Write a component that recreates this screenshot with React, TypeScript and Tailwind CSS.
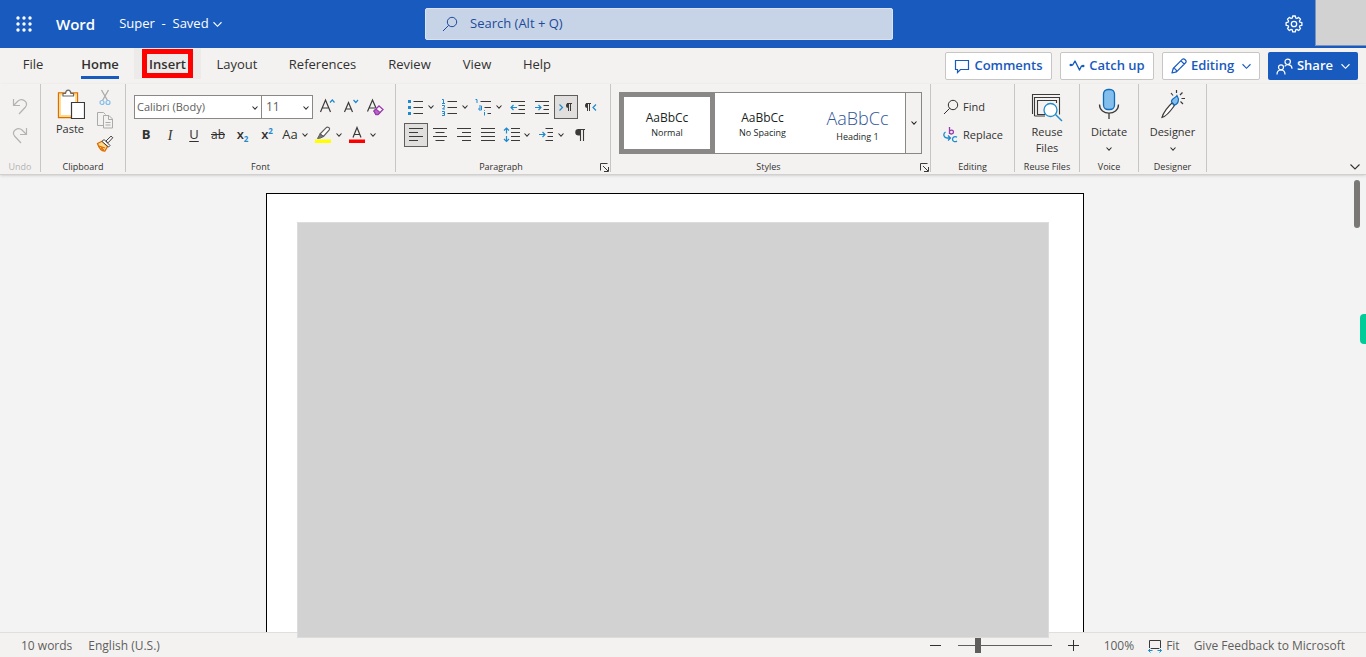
import { useState } from "react"
import type { ReactNode } from "react"
import clsx from "clsx"

const tabs = [
  { name: "File", width: "w-[66px]" },
  { name: "Home", width: "w-[68px]" },
  { name: "Insert", width: "w-[67px]" },
  { name: "Layout", width: "w-[72px]" },
  { name: "References", width: "w-[99px]" },
  { name: "Review", width: "w-[75px]" },
  { name: "View", width: "w-[60px]" },
  { name: "Help", width: "w-[60px]" },
]

export default function App() {
  return (
    <div className="flex h-screen flex-col overflow-hidden bg-[#f3f2f1] font-['Open_Sans','Noto_Sans',sans-serif] text-[#323130]">
      <TitleBar />
      <TabBar />
      <Ribbon />
      <DocumentArea />
      <StatusBar />
    </div>
  )
}

function TitleBar() {
  return (
    <header className="flex h-12 shrink-0 items-center justify-between bg-[#185abd] text-white">
      <div className="flex w-[425px] items-center">
        <button aria-label="App launcher" className="flex w-12 justify-center">
          <svg width="16" height="16" viewBox="0 0 16 16" fill="currentColor">
            {[2, 8, 14].map((y) => [2, 8, 14].map((x) => <circle key={`${x}-${y}`} cx={x} cy={y} r="1.7" />))}
          </svg>
        </button>
        <span className="ml-2 text-[15px] font-semibold">Word</span>
        <button className="ml-6 flex items-center gap-1 text-[13px]">
          <span className="whitespace-pre">Super  -  Saved</span>
          <Chevron size={9} />
        </button>
      </div>

      <div className="flex h-8 flex-1 items-center rounded-xs border border-[#dbe3f1] bg-[#c7d4e8] px-4 text-[#1d4b99]">
        <SearchIcon className="size-4" />
        <input
          type="text"
          aria-label="Search"
          placeholder="Search (Alt + Q)"
          className="ml-3 flex-1 bg-transparent text-[13px] outline-none placeholder:text-[#1d4b99]"
        />
      </div>

      <div className="flex w-[473px] items-center justify-end self-stretch">
        <button aria-label="Settings" className="mr-3">
          <svg width="18" height="18" viewBox="0 0 18 18" fill="none" stroke="currentColor" strokeWidth="1.3" strokeLinejoin="round">
            <path d="M7.7 1h2.6l.4 2 1.2.5 1.7-1.1 1.9 1.9-1.1 1.7.5 1.2 2 .5v2.6l-2 .4-.5 1.2 1.1 1.7-1.9 1.9-1.7-1.1-1.2.5-.4 2H7.7l-.4-2-1.2-.5-1.7 1.1-1.9-1.9 1.1-1.7-.5-1.2-2-.4V7.7l2-.5.5-1.2-1.1-1.7 1.9-1.9 1.7 1.1 1.2-.5z" />
            <circle cx="9" cy="9" r="2.7" />
          </svg>
        </button>
        <div className="mb-0.5 w-[51px] self-stretch border-b border-l border-[#7c94bd] bg-[#d2d2d2]" />
      </div>
    </header>
  )
}

function TabBar() {
  const [active, setActive] = useState("Home")

  return (
    <nav className="flex h-9 shrink-0 items-start justify-between pr-2">
      <div className="flex">
        {tabs.map((tab) => (
          <button
            key={tab.name}
            onClick={() => setActive(tab.name)}
            className={clsx(
              "relative flex h-[31px] justify-center pt-1.5 text-[13px] leading-5",
              tab.width,
              tab.name === "Insert" && "bg-[#edebe9] font-semibold",
              tab.name === active && "font-semibold",
            )}
          >
            {tab.name}
            {tab.name === active && <span className="absolute inset-x-[15px] bottom-0 h-[3px] bg-[#185abd]" />}
            {tab.name === "Insert" && <span className="absolute inset-x-2 top-px bottom-px border-5 border-[#fe0000]" />}
          </button>
        ))}
      </div>

      <div className="flex gap-2 pt-1 text-[13px] font-semibold text-[#185abd]">
        <button className="flex h-7 w-[107px] items-center justify-center gap-1 rounded-xs border border-[#c8c6c4] bg-white">
          <svg width="16" height="16" viewBox="0 0 16 16" fill="none" stroke="currentColor" strokeWidth="1.2">
            <path d="M1.5 2.500h13v9H6.500l-3 3v-3h-2z" />
          </svg>
          Comments
        </button>
        <button className="flex h-7 w-[94px] items-center justify-center gap-1 rounded-xs border border-[#c8c6c4] bg-white">
          <svg width="16" height="16" viewBox="0 0 16 16" fill="none" stroke="currentColor" strokeWidth="1.4">
            <path d="M1.5 7h2.2L6 3l4.500 9L12.500 8H14" strokeLinejoin="round" />
            <circle cx="1.8" cy="7" r="1.3" fill="currentColor" stroke="none" />
            <circle cx="14.2" cy="8" r="1.3" fill="currentColor" stroke="none" />
          </svg>
          Catch up
        </button>
        <button className="flex h-7 w-[98px] items-center justify-center gap-1 rounded-xs border border-[#c8c6c4] bg-white">
          <svg width="16" height="16" viewBox="0 0 16 16" fill="none" stroke="currentColor" strokeWidth="1.2" strokeLinejoin="round">
            <path d="M1 15l1.200-4.500L11.500 1.200c1.500-1.200 4.500 1.500 3.300 3.300L5.500 13.800zM10 2.800L13.200 6M2.200 10.500c1.800 0 3.300 1.500 3.300 3.300" />
          </svg>
          Editing
          <Chevron size={9} className="ml-1" />
        </button>
        <button className="flex h-7 w-[90px] items-center justify-center gap-1 rounded-xs bg-[#185abd] text-white">
          <svg width="17" height="17" viewBox="0 0 17 17" fill="none" stroke="currentColor" strokeWidth="1.2">
            <circle cx="5" cy="9.3" r="2.5" />
            <path d="M1 16.500c0-6 8-6 8 0" />
            <circle cx="11.7" cy="3.8" r="2.7" />
            <path d="M8.700 8.300c2-2.500 7.300-2 7.300 2.500" />
          </svg>
          Share
          <Chevron size={9} className="ml-1" />
        </button>
      </div>
    </nav>
  )
}

function Ribbon() {
  return (
    <section className="relative z-20 flex h-[91px] shrink-0 border-b border-[#d2d0ce] shadow-sm">
      <Group label="Undo" width="w-[41px]" disabled>
        <div className="flex flex-col items-center gap-3 pt-3.5 text-[#b5b3b1]">
          <button aria-label="Undo">
            <UndoIcon />
          </button>
          <button aria-label="Redo">
            <UndoIcon className="-scale-x-100" />
          </button>
        </div>
      </Group>

      <Group label="Clipboard" width="w-[85px]">
        <div className="flex justify-center gap-2 pt-[5px]">
          <button className="flex w-9 flex-col items-center text-[11px] leading-4">
            <svg width="30" height="32" viewBox="0 0 30 32" fill="none">
              <path d="M3.500 4h19v24.500h-19z" fill="#fff" stroke="#de6c00" strokeWidth="1.3" />
              <path d="M5 5.500h16V27H5z" stroke="#fbdc8e" strokeWidth="1.8" />
              <path d="M8 7V4.500h2.500c.4-4.500 5-4.500 5.400 0h2.600V7z" fill="#fff" stroke="#696969" strokeWidth="1.2" />
              <path d="M16.500 13.500h13v16h-13z" fill="#fff" stroke="#3b3a39" strokeWidth="1.2" />
            </svg>
            Paste
          </button>
          <div className="flex flex-col gap-1.5">
            <button aria-label="Cut">
              <svg width="18" height="17" viewBox="0 0 18 17" fill="none">
                <path d="M5.500 1l6 10.500M12.500 1l-6 10.500" stroke="#aaa" strokeWidth="1.3" />
                <circle cx="6" cy="13.500" r="2" stroke="#83bdeb" strokeWidth="1.2" />
                <circle cx="12" cy="13.500" r="2" stroke="#83bdeb" strokeWidth="1.2" />
              </svg>
            </button>
            <button aria-label="Copy">
              <svg width="18" height="17" viewBox="0 0 18 17" fill="none" stroke="#aaa">
                <path d="M7.500 13.500h-6v-13h6l2 2M7.500 3.500h5.500l3.500 3.500v9h-9zM12.500 3.500v4h4M9.500 10.500h5M9.500 13h5" />
              </svg>
            </button>
            <button aria-label="Format painter">
              <svg width="18" height="17" viewBox="0 0 18 17" fill="none">
                <path d="M1.500 8.500l5-2.500 5 5.500-2.500 4.500c-3 .3-6-3-7.500-7.500z" fill="#fbdc8e" stroke="#de6c00" strokeWidth="1.3" />
                <path d="M3 11l6 2M5 12.500l3 3" stroke="#de6c00" strokeWidth="1.3" />
                <path d="M6 6.500L8 4.500l6 6-1.500 1.500z" fill="#fff" stroke="#3b3a39" />
                <path d="M10 6l5-4.800 1.800 1.500L12 7.800z" fill="#fff" stroke="#3b3a39" />
              </svg>
            </button>
          </div>
        </div>
      </Group>

      <FontGroup />
      <ParagraphGroup />
      <StylesGroup />

      <Group label="Editing" width="w-[84px]">
        <div className="flex flex-col items-start gap-1 pt-[11px] pl-3 text-[11px] leading-6">
          <button className="flex items-center gap-1">
            <SearchIcon className="size-4" />
            Find
          </button>
          <button className="flex items-center gap-1">
            <svg width="16" height="16" viewBox="0 0 16 16" fill="none" strokeWidth="1.3">
              <path d="M6.500 0v7M6.500 4.500c1-2 4-1.500 4 .5s-3 2.800-4 .8" stroke="#9b3bad" />
              <path d="M14 10.300c-2-1.500-4.500-.3-4.500 1.900s2.500 3.300 4.500 1.800" stroke="#1e8bcd" />
              <path d="M2.500 5C-.5 7 1 11 4 11h3M5 8.500L7.500 11 5 13.500" stroke="#1e8bcd" />
            </svg>
            Replace
          </button>
        </div>
      </Group>

      <Group label="Reuse Files" width="w-[65px]">
        <button className="flex w-full flex-col items-center pt-2 text-[11px] leading-4">
          <svg width="32" height="32" viewBox="0 0 32 32" fill="none">
            <path d="M1.500 22V2.500H29M3.500 24V5.500h25v17" stroke="#3b3a39" strokeWidth="1.1" />
            <path d="M14 22.500H6.500v-14h19V11M3.500 24H14" stroke="#3b3a39" strokeWidth="1.1" />
            <circle cx="19.500" cy="18" r="6.500" fill="#fff" stroke="#1e8bcd" strokeWidth="1.3" />
            <path d="M24.500 22.500l6.500 6.500" stroke="#1e8bcd" strokeWidth="1.4" />
          </svg>
          <span>
            Reuse
            <br />
            Files
          </span>
        </button>
      </Group>

      <Group label="Voice" width="w-[59px]">
        <button className="flex w-full flex-col items-center pt-1 text-[11px] leading-4">
          <svg width="22" height="32" viewBox="0 0 22 32" fill="none">
            <rect x="5.500" y="1.500" width="11" height="20" rx="4.500" fill="#83beec" stroke="#0f6cbd" strokeWidth="1.3" />
            <path d="M1.500 16.500c0 11.500 19 11.500 19 0M11 25.500V31" stroke="#3b3a39" strokeWidth="1.3" />
          </svg>
          <span className="mt-1">Dictate</span>
          <span className="pt-1.5">
            <Chevron size={6} />
          </span>
        </button>
      </Group>

      <Group label="Designer" width="w-[68px]">
        <button className="flex w-full flex-col items-center pt-1 text-[11px] leading-4">
          <svg width="28" height="32" viewBox="0 0 28 32" fill="none">
            <path d="M3 29.500c1-4.500 6.500-11.500 10-14.500l2.500 2.500C13 21 7 28.500 3 29.500z" fill="#fff" stroke="#3b3a39" strokeWidth="1.2" />
            <path d="M12.500 14c-.5-4 3.500-3 5.500-6.500 3 4.500 1 9-3 9.500-.5-1.500-1-2.200-2.500-3z" fill="#83beec" stroke="#0f6cbd" strokeWidth="1.2" />
            <path d="M12 5l2 2.500M17.500 2v3M23.500 4.500L21 7M22.500 10.500H26M21.500 13.500L24 16" stroke="#3b3a39" strokeWidth="1.2" />
          </svg>
          <span className="mt-1">Designer</span>
          <span className="pt-1.5">
            <Chevron size={6} />
          </span>
        </button>
      </Group>

      <button aria-label="Collapse ribbon" className="mt-auto mr-1.5 mb-0.5 ml-auto">
        <Chevron size={10} />
      </button>
    </section>
  )
}

function FontGroup() {
  return (
    <Group label="Font" width="w-[270px]">
      <div className="flex flex-col gap-1 pt-[11px] pl-2">
        <div className="flex h-6 items-center">
          <div className="relative h-6 w-32">
            <select
              aria-label="Font name"
              className="block h-6 w-full appearance-none border border-[#8a8886] bg-white pl-0.5 text-[11px] text-[#605e5c]"
            >
              <option>Calibri (Body)</option>
            </select>
            <Chevron size={6} className="pointer-events-none absolute top-2.5 right-1" />
          </div>
          <div className="relative -ml-px h-6 w-[52px]">
            <select
              aria-label="Font size"
              className="block h-6 w-full appearance-none border border-[#8a8886] bg-white pl-1 text-[12px] text-[#605e5c]"
            >
              <option>11</option>
            </select>
            <Chevron size={6} className="pointer-events-none absolute top-2.5 right-1" />
          </div>
          <button aria-label="Grow font" className="ml-0.5 flex w-6 justify-center">
            <svg width="18" height="18" viewBox="0 0 18 18" fill="none" strokeWidth="1.2">
              <path d="M2.500 14L7.500 2l5 12M4.200 10h6.600" stroke="#3b3a39" />
              <path d="M12 4.500L14.300 2l2.200 2.500" stroke="#1e8bcd" />
            </svg>
          </button>
          <button aria-label="Shrink font" className="flex w-6 justify-center">
            <svg width="18" height="18" viewBox="0 0 18 18" fill="none" strokeWidth="1.2">
              <path d="M2.500 14l4-9.500 4 9.500M4 11h5" stroke="#3b3a39" />
              <path d="M11.500 2l2.300 2.500L16 2" stroke="#1e8bcd" />
            </svg>
          </button>
          <button aria-label="Clear formatting" className="flex w-6 justify-center">
            <svg width="18" height="18" viewBox="0 0 18 18" fill="none" strokeWidth="1.2">
              <path d="M1.500 13.500l5-11.500 3.500 8M3 10h6" stroke="#3b3a39" />
              <path d="M8 13l5-5 4 3.500-5 5H10z" fill="#fff" stroke="#9b3bad" strokeWidth="1.3" />
              <path d="M8 13l2-2 4 3.500-2 2h-2z" fill="#b867c5" stroke="#9b3bad" />
            </svg>
          </button>
        </div>

        <div className="flex h-6 items-center text-[13px]">
          <button className="w-6 font-bold">B</button>
          <button className="w-6 font-['Liberation_Serif',serif] text-[14px] italic">I</button>
          <button className="w-6 underline underline-offset-2">U</button>
          <button className="w-6 text-[12px] line-through">ab</button>
          <button className="flex w-[25px] items-center justify-center font-semibold">
            x<span className="pt-2 text-[8px] font-bold text-[#1e8bcd]">2</span>
          </button>
          <button className="flex w-6 items-center justify-center font-semibold">
            x<span className="pb-2 text-[8px] font-bold text-[#1e8bcd]">2</span>
          </button>
          <button className="flex w-8 items-center justify-center gap-1">
            Aa
            <Chevron size={6} />
          </button>
          <button aria-label="Highlight color" className="ml-[3px] flex items-center gap-1">
            <svg width="18" height="18" viewBox="0 0 18 18" fill="none">
              <path d="M6 8l6-6.200c1.500-1.500 4.500 0 3.200 2L9.500 10.500z" fill="#fff" stroke="#605e5c" strokeWidth="1.2" />
              <path d="M6 8l3.500 2.500-3 1.500-3 .5z" fill="#777" stroke="#605e5c" />
              <path d="M1 13.500h16V17H1z" fill="#ff0" />
            </svg>
            <Chevron size={6} />
          </button>
          <button aria-label="Font color" className="ml-1.5 flex items-center gap-1">
            <svg width="18" height="18" viewBox="0 0 18 18" fill="none">
              <path d="M5 11.500L9 1.500l4 10M6.300 8.500h5.400" stroke="#3b3a39" strokeWidth="1.2" />
              <path d="M1 13.500h16V17H1z" fill="red" />
            </svg>
            <Chevron size={6} />
          </button>
        </div>
      </div>
    </Group>
  )
}

function ParagraphGroup() {
  return (
    <Group label="Paragraph" width="w-[215px]" launcher>
      <div className="flex flex-col gap-1 pt-[11px] pl-2">
        <div className="flex">
          <Tool label="Bullets" menu>
            <path d="M6.500 3.500H16M6.500 9.500H16M6.500 15.500H16" stroke="#3b3a39" strokeWidth="1.1" />
            <path d="M1 2h3v3H1zM1 8h3v3H1zM1 14h3v3H1z" fill="#1e8bcd" />
          </Tool>
          <Tool label="Numbering" menu>
            <path d="M6.500 3.500H16M6.500 9.500H16M6.500 15.500H16" stroke="#3b3a39" strokeWidth="1.1" />
            <path d="M1 1.500h1.500v4M1 5.500h3M1 7.500h2.500v1.500L1.500 11H4M1 13.500h2.500v4H1M1.500 15.500h2" stroke="#1e8bcd" />
          </Tool>
          <Tool label="Multilevel list" menu>
            <path d="M5.500 3.500H16M9.500 9.500H16M12.500 15.500H16" stroke="#3b3a39" strokeWidth="1.1" />
            <path d="M.5 1.500h1.500V5M4 8h2.500v4H4v-2h2.500M9.500 12v.8M9.500 14v3.500" stroke="#1e8bcd" />
          </Tool>
          <Tool label="Decrease indent">
            <path d="M2 3.500h14M9.500 7.500H16M9.500 11.500H16M2 15.500h14" stroke="#3b3a39" strokeWidth="1.1" />
            <path d="M8 9.500H2M4.500 7L2 9.500 4.500 12" stroke="#1e8bcd" strokeWidth="1.2" />
          </Tool>
          <Tool label="Increase indent">
            <path d="M2 3.500h14M10.500 7.500H16M10.500 11.500H16M2 15.500h14" stroke="#3b3a39" strokeWidth="1.1" />
            <path d="M2 9.500h6M5.500 7L8 9.500 5.500 12" stroke="#1e8bcd" strokeWidth="1.2" />
          </Tool>
          <Tool label="Left to right" pressed>
            <path d="M2.500 6.500L5.500 9.500l-3 3" stroke="#1e8bcd" strokeWidth="1.2" />
            <path d="M11.500 5.500V13M13.500 5.500V13M10 5.500h5" stroke="#3b3a39" />
            <path d="M11.500 5a2.500 2.500 0 000 5z" fill="#3b3a39" />
          </Tool>
          <Tool label="Right to left">
            <path d="M15 6.500l-3 3 3 3" stroke="#1e8bcd" strokeWidth="1.2" />
            <path d="M6.500 5.500V13M8.500 5.500V13M5 5.500h5" stroke="#3b3a39" />
            <path d="M6.500 5a2.500 2.500 0 000 5z" fill="#3b3a39" />
          </Tool>
        </div>
        <div className="flex">
          <Tool label="Align left" pressed>
            <path d="M2 2.500h14M2 6.500h9M2 10.500h14M2 14.500h9" stroke="#3b3a39" strokeWidth="1.1" />
          </Tool>
          <Tool label="Center">
            <path d="M2 2.500h14M4.500 6.500h9M2 10.500h14M4.500 14.500h9" stroke="#3b3a39" strokeWidth="1.1" />
          </Tool>
          <Tool label="Align right">
            <path d="M2 2.500h14M7 6.500h9M2 10.500h14M7 14.500h9" stroke="#3b3a39" strokeWidth="1.1" />
          </Tool>
          <Tool label="Justify">
            <path d="M2 2.500h14M2 6.500h14M2 10.500h14M2 14.500h14" stroke="#3b3a39" strokeWidth="1.1" />
          </Tool>
          <Tool label="Line spacing" menu>
            <path d="M8 2.500h9M8 6.500h9M8 10.500h9M8 14.500h9" stroke="#3b3a39" strokeWidth="1.1" />
            <path d="M3.500 2v5.500M1 4.500L3.500 2 6 4.500M3.500 10v5.500M1 13l2.500 2.500L6 13" stroke="#1e8bcd" strokeWidth="1.2" />
          </Tool>
          <Tool label="Special indent" menu>
            <path d="M8.500 2.500H16M10.500 6.500H16M10.500 10.500H16M8.500 14.500H16" stroke="#3b3a39" strokeWidth="1.1" />
            <path d="M2 8.500h6M5.500 6L8 8.500 5.500 11" stroke="#1e8bcd" strokeWidth="1.2" />
          </Tool>
          <Tool label="Show paragraph marks">
            <path d="M9.500 3.500V15M12.500 3.500V15M7 3.500h7" stroke="#3b3a39" strokeWidth="1.1" />
            <path d="M9.500 3h-2a3.200 3.200 0 000 6.500h2z" fill="#3b3a39" />
          </Tool>
        </div>
      </div>
    </Group>
  )
}

function StylesGroup() {
  return (
    <Group label="Styles" width="w-[320px]" launcher>
      <div className="mx-2 mt-2 flex h-[62px] border border-[#8a8886] bg-white text-[#201f1e]">
        <button className="-my-px -ml-px flex w-24 flex-col items-center justify-center border-5 border-[#8a8886] pt-[3px] text-[9px] leading-[14px]">
          <span className="text-[12px] leading-4">AaBbCc</span>
          Normal
        </button>
        <button className="flex w-[95px] flex-col items-center justify-center pt-[3px] text-[9px] leading-[14px]">
          <span className="text-[12px] leading-4">AaBbCc</span>
          No Spacing
        </button>
        <button className="flex flex-1 flex-col items-center justify-center pt-[3px] text-[9px] leading-[14px]">
          <span className="text-[18px] leading-6 font-light text-[#2f5496]">AaBbCc</span>
          Heading 1
        </button>
        <button aria-label="More styles" className="flex w-4 items-center justify-center border-l border-[#8a8886] bg-[#f3f2f1]">
          <Chevron size={6} />
        </button>
      </div>
    </Group>
  )
}

function DocumentArea() {
  return (
    <main className="relative flex min-h-0 flex-1 justify-center bg-[#f3f3f3] pt-[18px] pr-4">
      <div className="flex w-[818px] flex-col border border-b-0 border-black bg-white pt-7 pr-[34px] pl-[30px]">
        <div className="relative z-10 -mb-1.5 flex-1 border border-[#dcdcdc] bg-[#d2d2d2]" />
      </div>
      <div className="absolute top-[5px] right-1.5 h-12 w-1.5 rounded-full bg-[#7a7874]" />
      <div className="absolute top-[139px] right-0 h-[30px] w-1.5 rounded-l bg-[#00cc99] shadow-xl" />
    </main>
  )
}

function StatusBar() {
  const [zoom, setZoom] = useState(100)

  return (
    <footer className="flex h-[25px] shrink-0 items-center justify-between border-t border-[#e1dfdd] px-[21px] pt-px text-[12px] text-[#605e5c]">
      <div className="flex gap-4">
        <span>10 words</span>
        <button>English (U.S.)</button>
      </div>
      <div className="flex items-center">
        <button aria-label="Zoom out" className="text-[#323130]">
          <svg width="12" height="12" viewBox="0 0 12 12" stroke="currentColor">
            <path d="M0 5.500h11" />
          </svg>
        </button>
        <div className="relative mx-4 flex w-[94px] items-center">
          <span className="absolute inset-x-0 h-px bg-[#605e5c]" />
          <input
            type="range"
            aria-label="Zoom"
            min={10}
            max={470}
            value={zoom}
            onChange={(e) => setZoom(Number(e.target.value))}
            className="relative h-4 w-full appearance-none bg-transparent [&::-webkit-slider-thumb]:h-[15px] [&::-webkit-slider-thumb]:w-1.5 [&::-webkit-slider-thumb]:appearance-none [&::-webkit-slider-thumb]:bg-[#605e5c]"
          />
        </div>
        <button aria-label="Zoom in" className="text-[#323130]">
          <svg width="12" height="12" viewBox="0 0 12 12" stroke="currentColor">
            <path d="M0 5.500h11M5.500 0v11" />
          </svg>
        </button>
        <button className="ml-6">{zoom}%</button>
        <button className="ml-3.5 flex items-center gap-1">
          <svg width="14" height="14" viewBox="0 0 14 14" fill="none">
            <path d="M1.500 9V1.500h11V9M3 9.500h8" stroke="#3b3a39" />
            <path d="M.5 11.500h4M9.500 11.500h4M2.500 9.500l-2 2 2 2M11.500 9.500l2 2-2 2" stroke="#1e8bcd" />
          </svg>
          Fit
        </button>
        <a href="#feedback" className="ml-3.5">
          Give Feedback to Microsoft
        </a>
      </div>
    </footer>
  )
}

interface GroupProps {
  label: string
  width: string
  launcher?: boolean
  disabled?: boolean
  children: ReactNode
}

function Group({ label, width, launcher, disabled, children }: GroupProps) {
  return (
    <div className={clsx("mb-0.5 flex flex-col justify-between border-r border-[#c8c6c4]", width)}>
      {children}
      <div
        className={clsx(
          "relative text-center text-[9px] leading-[10px]",
          launcher && "pr-1",
          disabled && "text-[#b5b3b1]",
        )}
      >
        {label}
        {launcher && (
          <button aria-label={`${label} settings`} className="absolute right-px bottom-0">
            <svg width="9" height="9" viewBox="0 0 9 9" fill="none" stroke="#3b3a39">
              <path d="M.5 7.500v-7h7M3 3l5 5M8.500 4v4.500H4" />
            </svg>
          </button>
        )}
      </div>
    </div>
  )
}

interface ToolProps {
  label: string
  menu?: boolean
  pressed?: boolean
  children: ReactNode
}

function Tool({ label, menu, pressed, children }: ToolProps) {
  return (
    <button
      aria-label={label}
      className={clsx(
        "flex h-6 items-center",
        menu ? "w-[34px] gap-[3px] pl-[3px]" : "w-6 justify-center",
        pressed && "border border-[#605e5c] bg-[#e1dfdd]",
      )}
    >
      <svg width="18" height="18" viewBox="0 0 18 18" fill="none" className="shrink-0">
        {children}
      </svg>
      {menu && <Chevron size={6} className="shrink-0" />}
    </button>
  )
}

function Chevron({ size, className }: { size: number; className?: string }) {
  return (
    <svg
      width={size}
      height={size}
      viewBox={`0 0 ${size} ${size}`}
      fill="none"
      stroke="currentColor"
      strokeWidth="1.1"
      className={className}
    >
      <path d={`M.5 ${size / 4}L${size / 2} ${size * 0.7}L${size - 0.5} ${size / 4}`} />
    </svg>
  )
}

function SearchIcon({ className }: { className?: string }) {
  return (
    <svg viewBox="0 0 16 16" fill="none" stroke="currentColor" className={className}>
      <circle cx="10" cy="6" r="4.7" />
      <path d="M6.700 9.300L1 15" />
    </svg>
  )
}

function UndoIcon({ className }: { className?: string }) {
  return (
    <svg width="16" height="17" viewBox="0 0 16 17" fill="none" stroke="currentColor" strokeWidth="1.2" className={className}>
      <path d="M1.500 1v6.500H8M1.500 7.500L6 3c4-3.500 11 1 7.500 6L7 16" />
    </svg>
  )
}
